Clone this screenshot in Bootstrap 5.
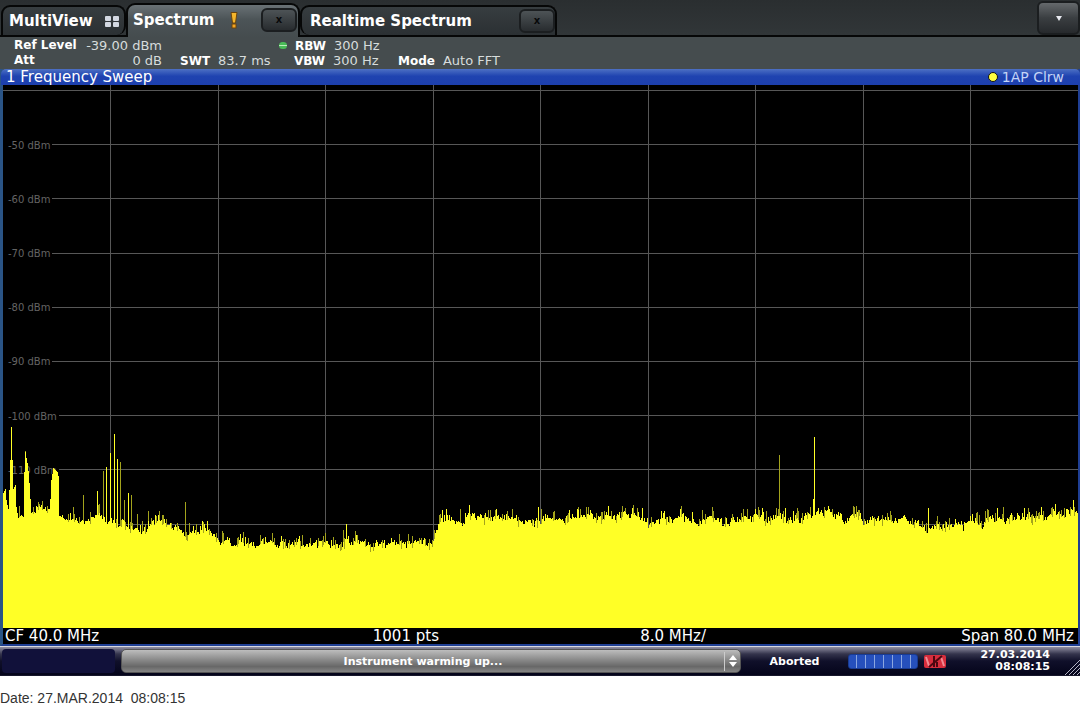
<!DOCTYPE html>
<html lang="en">
<head>
<meta charset="utf-8">
<meta name="viewport" content="width=device-width, initial-scale=1">
<title>Spectrum</title>
<link href="https://cdn.jsdelivr.net/npm/bootstrap@5.3.0/dist/css/bootstrap.min.css" rel="stylesheet">
<style>
body { background:#fff; font-family:"DejaVu Sans",Verdana,sans-serif; color:#fff; line-height:1; }
button { font-family:inherit; }
.analyzer { background:#454c4e; }
.tabstrip { background:linear-gradient(#2a2e30,#313638); height:37px; border-bottom:2px solid #060707; padding-left:1px; }
.tab-item { height:30px; border:2px solid #060707; border-bottom:0; border-radius:9px 9px 0 0; background:linear-gradient(#373d40,#2b3033); font-size:15px; font-weight:bold; }
.tab-item a { color:#fff; text-decoration:none; }
.tab-multi { width:125px; padding-left:6px; border-bottom-right-radius:9px; }
.tab-active { width:174px; height:34px; margin-bottom:-2px; padding:0 1px 2px 5px; background:linear-gradient(#697175,#4c5457 45%,#454c4e); z-index:1; }
.tab-real { width:257px; padding-left:8px; border-bottom-left-radius:9px; }
.key { border:2px solid #1b1e20; border-radius:6px; background:linear-gradient(#4d5356,#282c2f); color:#08090a; font-size:10px; font-weight:bold; padding:0; line-height:1; }
.key-close { width:36px; height:24px; }
.key-menu { width:43px; height:34px; background:linear-gradient(#65696c,#3a3e41 50%,#26292c); }
.params { display:grid; grid-template-columns:166px 99px 119px auto; grid-auto-rows:15px; align-items:center; padding:1px 14px 1px; font-size:13px; color:#d7dcdc; }
.params b { font-size:12px; color:#fff; }
.reading { width:148px; }
.led { width:8px; height:7px; border-radius:4px; background:linear-gradient(#49bb57 38%,#b9ecb9 38% 55%,#49bb57 55%); }
.under { padding-left:15px; }
.window-frame { border:solid #1f3f94; border-width:0 2px 2px 3px; border-left-color:#2a5486; }
.window-title { background:linear-gradient(#4d70c4,#1f43b0 45%,#1d3fae); height:16px; margin:0 -2px; padding:0 16px 0 5px; font-size:15px; border-radius:5px 5px 0 0; }
.trace-name { font-size:14px; color:#c4d4f6; }
.dot { width:10px; height:10px; border-radius:50%; border:1px solid #101018; background:#ffff40; }
.plot { display:block; width:100%; height:543px; background:#000; }
.plot text { font-size:10px; fill:#646464; }
.plot line { stroke:#575757; shape-rendering:crispEdges; }
.scale-foot { background:#000; height:16px; font-size:15px; padding:0 4px 0 2px; }
.statusbar { height:30px; background:linear-gradient(#8f8ea1,#34344c 25%,#10102a 50%,#04041a); border-top:1px solid #d8d8df; border-bottom:1px solid #17172c; font-size:11px; font-weight:bold; padding-left:2px; gap:6px; }
.slot { width:113px; height:24px; border-radius:4px; background:#11113a; }
.message { height:24px; border:1px solid #555; border-radius:5px; background:linear-gradient(#bdbdbd,#898989 45%,#686868 75%,#858585); color:#fff; font-weight:bold; font-size:11px; padding:0; }
.spin { border-left:1px solid #ccc; width:16px; height:19px; }
.state { width:95px; }
.meter { width:70px; height:15px; border:1px solid #183b93; border-radius:3px; background:repeating-linear-gradient(90deg,#2650bc 0 7px,#8ba6df 7px 8px,#2650bc 8px 9px); }
.clock { width:98px; line-height:12px; }
.grip { width:24px; }
.stamp { font:14px/16px "Liberation Sans",Arial,sans-serif; color:#333; padding-top:14px; white-space:pre; }
</style>
</head>
<body>
<main class="analyzer">
  <nav class="tabstrip d-flex align-items-end">
    <div class="tab-item tab-multi d-flex align-items-center gap-2"><a href="#">MultiView</a>
      <svg class="ms-1" width="14" height="11" fill="#d3d8e2" aria-hidden="true"><rect width="6" height="5" rx="1"/><rect x="8" width="6" height="5" rx="1"/><rect y="6" width="6" height="5" rx="1"/><rect x="8" y="6" width="6" height="5" rx="1"/></svg>
    </div>
    <div class="tab-item tab-active d-flex align-items-center position-relative"><a href="#">Spectrum</a>
      <svg class="ms-3" width="8" height="17" aria-hidden="true"><path d="M1 .5h6L5.500 11h-3z" fill="#f5b52b" stroke="#6b440d"/><rect x="2" y="12" width="4" height="4" fill="#f5a522" stroke="#6b440d"/></svg>
      <button class="key key-close ms-auto" aria-label="Close Spectrum">x</button>
    </div>
    <div class="tab-item tab-real d-flex align-items-center"><a href="#">Realtime Spectrum</a>
      <button class="key key-close ms-auto" aria-label="Close Realtime Spectrum">x</button>
    </div>
    <button class="key key-menu ms-auto" aria-label="Menu"><svg width="6" height="5" aria-hidden="true"><path d="M0 0h6L3 5z" fill="#e8eaf0"/></svg></button>
  </nav>

  <section class="params">
    <div class="reading d-flex justify-content-between"><b>Ref Level</b><span>-39.00 dBm</span></div>
    <div></div>
    <div class="d-flex align-items-center"><span class="led me-2"></span><b class="me-2">RBW</b><span>300 Hz</span></div>
    <div></div>
    <div class="reading d-flex justify-content-between"><b>Att</b><span>0 dB</span></div>
    <div><b class="me-2">SWT</b>83.7 ms</div>
    <div class="under"><b class="me-2">VBW</b>300 Hz</div>
    <div><b class="me-2">Mode</b>Auto FFT</div>
  </section>

  <section class="window-frame">
    <header class="window-title d-flex align-items-center justify-content-between">
      <span>1 Frequency Sweep</span>
      <span class="trace-name d-flex align-items-center"><span class="dot me-1"></span>1AP Clrw</span>
    </header>
    <svg class="plot" role="img" aria-label="Frequency sweep">
      <g id="grid"></g>
      <svg width="100%" height="100%" viewBox="0 0 1075 543" preserveAspectRatio="none" shape-rendering="crispEdges">
        <path id="thin" fill="#a3a31c"/>
        <path id="trace" fill="#ffff26"/>
      </svg>
    </svg>
    <footer class="scale-foot row g-0 align-items-center">
      <div class="col-3">CF 40.0 MHz</div>
      <div class="col-3 text-center">1001 pts</div>
      <div class="col-3 text-center">8.0 MHz/</div>
      <div class="col-3 text-end">Span 80.0 MHz</div>
    </footer>
  </section>

  <footer class="statusbar d-flex align-items-center">
    <div class="slot"></div>
    <button class="message flex-grow-1 d-flex align-items-center"><span class="flex-grow-1">Instrument warming up...</span>
      <span class="spin d-flex align-items-center justify-content-center"><svg width="8" height="12" fill="#fff" aria-hidden="true"><path d="M0 5 4 0l4 5zM0 7h8l-4 5z"/></svg></span></button>
    <div class="state text-center">Aborted</div>
    <div class="meter"></div>
    <svg width="22" height="13" aria-hidden="true"><rect width="22" height="13" rx="2" fill="#d72d3d"/><path d="M2 2l3 9M17 2l3 9" stroke="#f08a92" stroke-width="2"/><path d="M10 1v11M5 12 18 1M13 7v5" stroke="#4c0710" stroke-width="2"/></svg>
    <div class="clock text-end">27.03.2014<br>08:08:15</div>
    <svg class="grip align-self-end" height="16" aria-hidden="true"><path d="M9 16 24 1M13 16 24 5M17 16l7-7M21 16l3-3" stroke="#b4b4c4"/></svg>
  </footer>
</main>
<div class="stamp">Date: 27.MAR.2014  08:08:15</div>

<script>
// Grid: ten divisions each way, 10 dB per division
let grid = '';
for (let i = 1; i < 10; i++) grid += `<line x1="${i * 10}%" x2="${i * 10}%" y1="0" y2="100%"/>`;
for (let i = 0; i < 9; i++) {
  const y = ((5.5 + i * 54.2) / 543 * 100).toFixed(2) + '%';
  const labelled = i > 0 && i < 8;
  grid += `<line x1="${labelled ? (i > 5 ? 56 : 49) : 0}" x2="100%" y1="${y}" y2="${y}"/>`;
  if (labelled) grid += `<text x="5" y="${y}" dy="4">-${40 + i * 10} dBm</text>`;
}
document.getElementById('grid').innerHTML = grid;

// Noise floor envelope: [x, y] knots
const knots = [[0,408],[2,404],[3,415],[5,424],[6,405],[7,375],[8,372],[9,375],[10,404],[12,400],[13,422],[15,433],[18,430],[20,432],[21,387],[22,367],[24,378],[25,386],[26,398],[27,414],[28,428],[30,427],[46,424],[47,414],[48,395],[50,383],[52,385],[54,387],[55,391],[56,431],[59,431],[61,440],[64,438],[70,437],[78,443],[82,439],[89,431],[95,426],[98,433],[104,439],[108,442],[125,442],[131,448],[142,449],[147,445],[155,438],[163,442],[171,446],[178,449],[198,448],[204,449],[210,455],[215,461],[222,458],[225,460],[429,461],[433,448],[437,436],[463,437],[466,431],[475,437],[508,437],[540,437],[587,433],[617,433],[637,434],[648,442],[657,436],[697,437],[735,438],[757,435],[797,437],[808,432],[814,432],[832,433],[842,437],[852,432],[860,442],[867,438],[887,439],[907,438],[922,444],[960,441],[997,437],[1037,434],[1057,432],[1075,428]];
// Discrete spectral lines: [x, top, bright]
const lines = [[8,342,1],[16,421,0],[22,366,0],[30,424,0],[36,419,0],[39,416,0],[80,410,0],[94,406,1],[100,386,0],[103,382,1],[107,368,1],[111,349,1],[114,374,1],[117,377,0],[121,415,0],[125,408,1],[128,410,0],[134,429,0],[145,426,0],[156,426,0],[182,417,0],[340,445,0],[343,439,1],[457,424,0],[466,420,1],[493,424,1],[535,422,1],[538,424,0],[575,425,1],[605,421,1],[622,423,0],[629,423,1],[677,424,1],[689,427,1],[740,424,0],[759,423,1],[776,370,0],[782,423,1],[795,426,0],[810,414,1],[811,352,1],[925,423,1],[984,424,0],[994,423,1],[1038,422,1],[1052,424,0],[1063,427,1],[1070,415,1]];
let seed = 20140327;
const rnd = () => (seed = (seed * 1664525 + 1013904223) % 4294967296) / 4294967296;
let k = 0, drift = 0, solid = 'M0 543', thin = '';
for (let x = 0; x < 1075; x++) {
  while (k < knots.length - 2 && x >= knots[k + 1][0]) k++;
  const [a, ya] = knots[k], [b, yb] = knots[k + 1];
  let y = ya + (yb - ya) * (x - a) / (b - a);
  const steep = x < 29 || (x > 44 && x < 58);
  if (!steep) {
    drift = drift * .75 + (rnd() - .5) * 5;
    y += drift + rnd() * 5 - 5;
    const r = rnd();
    if (r > .8) thin += `M${x} 543V${Math.round(y - 3 - rnd() * 6)}h1V543z`;
    else if (r > .68) y -= 2 + rnd() * 5;
    if (r > .8) y += 3;
  }
  y = Math.round(y);
  solid += `V${y}h1`;
}
solid += 'V543z';
for (const [x, y, bright] of lines) {
  const bar = `M${x} 543V${y}h1V543z`;
  if (bright) solid += bar; else thin += bar;
}
document.getElementById('trace').setAttribute('d', solid);
document.getElementById('thin').setAttribute('d', thin);
</script>
<script src="https://cdn.jsdelivr.net/npm/bootstrap@5.3.0/dist/js/bootstrap.bundle.min.js"></script>
</body>
</html>
